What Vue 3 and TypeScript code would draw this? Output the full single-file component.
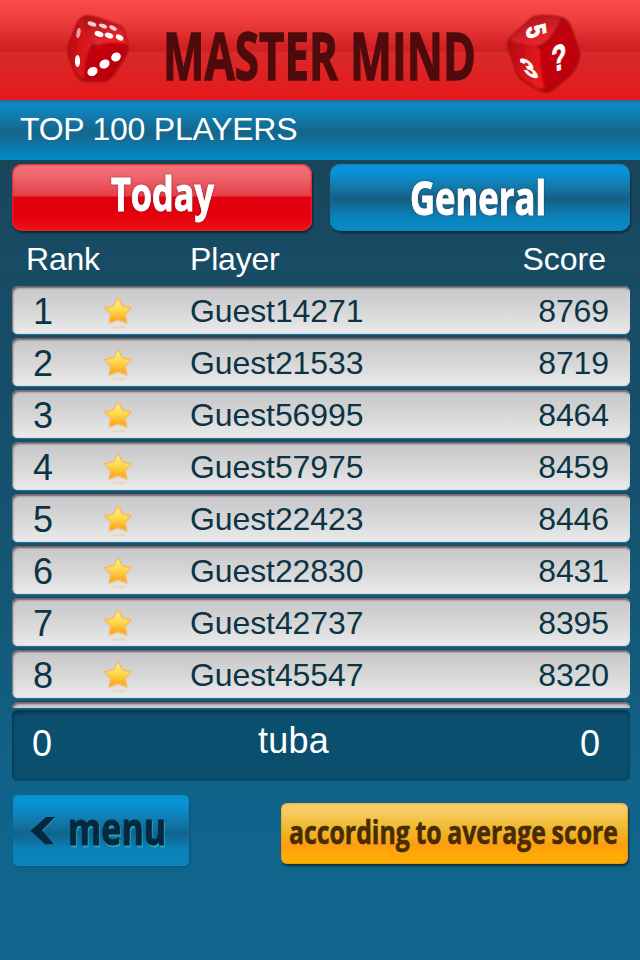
<script setup lang="ts">
import { ref } from "vue";

interface Entry {
  rank: number;
  name: string;
  score: number;
}

const tab = ref<"today" | "general">("today");

const entries: Entry[] = [
  { rank: 1, name: "Guest14271", score: 8769 },
  { rank: 2, name: "Guest21533", score: 8719 },
  { rank: 3, name: "Guest56995", score: 8464 },
  { rank: 4, name: "Guest57975", score: 8459 },
  { rank: 5, name: "Guest22423", score: 8446 },
  { rank: 6, name: "Guest22830", score: 8431 },
  { rank: 7, name: "Guest42737", score: 8395 },
  { rank: 8, name: "Guest45547", score: 8320 },
];

const me: Entry = { rank: 0, name: "tuba", score: 0 };
</script>

<template>
  <div class="screen">
    <svg class="defs" width="0" height="0">
      <defs>
        <linearGradient id="starFill" x1="0" y1="0" x2="0" y2="1">
          <stop offset="0" stop-color="#fff08a" />
          <stop offset="0.5" stop-color="#ffd84a" />
          <stop offset="1" stop-color="#fb9a12" />
        </linearGradient>
        <linearGradient id="dieTop" x1="0" y1="0" x2="0.6" y2="1">
          <stop offset="0" stop-color="#a80f14" />
          <stop offset="1" stop-color="#ee2a30" />
        </linearGradient>
        <linearGradient id="dieLeft" x1="0" y1="0" x2="1" y2="0.4">
          <stop offset="0" stop-color="#b3080e" />
          <stop offset="1" stop-color="#ea1c22" />
        </linearGradient>
        <linearGradient id="dieRight" x1="0" y1="0" x2="1" y2="1">
          <stop offset="0" stop-color="#c90308" />
          <stop offset="1" stop-color="#b8040a" />
        </linearGradient>
        <filter id="soft" x="-10%" y="-10%" width="120%" height="120%">
          <feGaussianBlur stdDeviation="0.9" />
        </filter>
      </defs>
    </svg>

    <header class="header">
      <svg class="die" width="64" height="70" viewBox="66 13 64 70">
        <path d="M84 16Q88 15 96 17L119 25Q124 27 125 33L128 46Q129 51 126 56L114 75Q110 81 103 82L86 82Q80 81 76 75L69 59Q67 53 68 46L76 25Q79 18 84 16Z" fill="#a30a10" filter="url(#soft)" />
        <g filter="url(#soft)">
          <path d="M84 17Q88 16 96 18L119 26Q124 29 125 38L127 45Q112 42 100 45Q92 46 88 38Q82 28 84 17Z" fill="url(#dieTop)" />
          <path d="M83 18Q82 31 92 45Q84 55 84 79Q78 77 75 70L70 57Q68 51 69 46L77 26Q79 20 83 18Z" fill="url(#dieLeft)" />
          <path d="M93 49Q102 40 125 43Q129 47 125 55L113 73Q108 80 102 80L88 80Q83 79 84 70Q85 56 93 49Z" fill="url(#dieRight)" />
        </g>
        <g fill="#fff">
          <g opacity="0.8">
            <ellipse cx="92" cy="24" rx="4.500" ry="2.200" transform="rotate(18 92 24)" />
            <ellipse cx="103" cy="26" rx="4.200" ry="2" transform="rotate(20 103 26)" />
            <ellipse cx="113" cy="28" rx="4" ry="2" transform="rotate(28 113 28)" />
          </g>
          <ellipse cx="99" cy="34" rx="4.600" ry="2.700" transform="rotate(20 99 34)" />
          <ellipse cx="109" cy="35.500" rx="4.400" ry="2.600" transform="rotate(20 109 35.5)" />
          <ellipse cx="119.500" cy="37.500" rx="4" ry="2.600" transform="rotate(28 119.5 37.5)" />
          <ellipse cx="78.500" cy="33" rx="2" ry="5" opacity="0.6" transform="rotate(10 78.5 33)" />
          <ellipse cx="77.500" cy="61" rx="2.600" ry="6" />
          <ellipse cx="92.500" cy="71.500" rx="5.300" ry="4.300" transform="rotate(-30 92.5 71.5)" />
          <ellipse cx="104.500" cy="64" rx="5.300" ry="4.300" transform="rotate(-30 104.5 64)" />
          <ellipse cx="116" cy="57" rx="5" ry="4.300" transform="rotate(-30 116 57)" />
        </g>
      </svg>

      <svg class="title" width="316" height="70" viewBox="0 0 316 70">
        <text class="cond title-text" x="0" y="60" textLength="175" lengthAdjust="spacingAndGlyphs">MASTER</text>
        <text class="cond title-text" x="187" y="60" textLength="126" lengthAdjust="spacingAndGlyphs">MIND</text>
      </svg>

      <svg class="die" width="76" height="82" viewBox="506 13 76 82">
        <path d="M537 16Q545 14 561 17Q567 18 570 24L579 50Q581 57 577 66Q573 74 565 80L552 91Q547 94 540 91L524 82Q519 79 516 71L508 48Q506 42 511 37L530 19Q533 16 537 16Z" fill="#9d0b10" filter="url(#soft)" />
        <g filter="url(#soft)">
          <path d="M537 17Q548 15 561 18Q559 26 551 36Q545 44 536 46Q521 45 510 41Q511 37 516 33L531 20Q533 17 537 17Z" fill="url(#dieTop)" />
          <path d="M510 41Q523 44 535 46Q542 48 543 58L545 86Q543 91 537 88L524 80Q519 77 516 69L509 48Z" fill="url(#dieLeft)" />
          <path d="M541 48Q555 37 563 22Q568 21 571 29L578 50Q580 57 576 65Q572 73 564 79L552 89Q545 93 544 86Q538 60 541 48Z" fill="url(#dieRight)" />
        </g>
        <text class="die-text" font-size="25" transform="matrix(0.1 0.85 -1.08 0.34 527 34)">5</text>
        <text class="die-text" font-size="29" transform="matrix(0.85 0.25 0.42 0.88 533 77)">3</text>
        <text class="die-text" font-size="36" transform="matrix(0.68 -0.2 0.04 1 559.500 70)">?</text>
      </svg>
    </header>

    <div class="subtitle"><span>TOP 100 PLAYERS</span></div>

    <div class="tabs">
      <button class="tab tab-red" :aria-pressed="tab === 'today'" @click="tab = 'today'">
        <svg width="300" height="67" viewBox="0 0 300 67">
          <text class="cond tab-text" x="99" y="47" textLength="103" lengthAdjust="spacingAndGlyphs">Today</text>
        </svg>
      </button>
      <button class="tab tab-blue" :aria-pressed="tab === 'general'" @click="tab = 'general'">
        <svg width="300" height="67" viewBox="0 0 300 67">
          <text class="cond tab-text" x="80" y="51" textLength="136" lengthAdjust="spacingAndGlyphs">General</text>
        </svg>
      </button>
    </div>

    <div class="columns">
      <span class="c-rank">Rank</span>
      <span class="c-player">Player</span>
      <span class="c-score">Score</span>
    </div>

    <div class="list">
      <div v-for="e in entries" :key="e.rank" class="row">
        <span class="rank">{{ e.rank }}</span>
        <svg class="star" width="32" height="36" viewBox="0 0 32 36">
          <path d="M16 2.500L20.600 11L29.500 12.500L23.400 19.200L24.800 28L16 24.800L7.200 28L8.600 19.200L2.500 12.500L11.400 11Z" fill="url(#starFill)" stroke="#f3bd68" stroke-width="1.500" stroke-linejoin="round" />
          <path d="M9 31.500L13 30.500L16 32L19 30.500L24 31.500L23 33.500H9Z" fill="#f8c98a" opacity="0.4" />
        </svg>
        <span class="name">{{ e.name }}</span>
        <span class="score">{{ e.score }}</span>
      </div>
      <div class="row"></div>
    </div>

    <div class="me">
      <span class="me-rank">{{ me.rank }}</span>
      <span class="me-name">{{ me.name }}</span>
      <span class="me-score">{{ me.score }}</span>
    </div>

    <footer class="footer">
      <button class="menu">
        <svg width="176" height="71" viewBox="0 0 176 71">
          <path d="M35 23H42L29 37L42 50H34L18 37Z" fill="#30b5cf" opacity="0.7" />
          <path d="M33 22H42L29 35.500L41 49.500H32.500L17.500 36Z" fill="#04293c" />
          <text class="cond menu-text" x="55" y="50" textLength="98" lengthAdjust="spacingAndGlyphs">menu</text>
        </svg>
      </button>
      <button class="average">
        <svg width="346" height="60" viewBox="0 0 346 60">
          <text class="cond average-text" x="8" y="39.500" word-spacing="-1" textLength="329" lengthAdjust="spacingAndGlyphs">according to average score</text>
        </svg>
      </button>
    </footer>
  </div>
</template>

<style>
body {
  margin: 0;
  background: #10668f;
}
</style>

<style scoped>
.screen {
  width: 640px;
  height: 960px;
  overflow: hidden;
  display: flex;
  flex-direction: column;
  font-family: "Liberation Sans", Arial, sans-serif;
  font-size: 32px;
  color: #fff;
  background: linear-gradient(#19455a 160px, #184b64 260px, #15516e 480px, #135d7f 700px, #10648b 800px, #10668f 960px);
}

.defs {
  position: absolute;
}

button {
  display: block;
  padding: 0;
  border: 0;
  box-sizing: border-box;
  cursor: pointer;
}

button svg {
  display: block;
}

svg {
  overflow: visible;
}

.cond {
  font-family: "Open Sans", "Noto Sans", sans-serif;
  font-weight: 700;
}

.header {
  flex: none;
  height: 100px;
  box-sizing: border-box;
  padding: 13px 58px 0 66px;
  display: flex;
  justify-content: space-between;
  background: linear-gradient(#fb4a4a 0, #f24040 18px, #cf1f22 49px, #cf1f22 51px, #d82a2c 52px, #e61919 100px);
}

.title {
  margin: 7px 0 0 5px;
}

.title-text {
  font-size: 67px;
  fill: #4f0a0c;
  stroke: #4f0a0c;
  stroke-width: 1.4;
}

.die {
  flex: none;
}

.die-text {
  font-family: "Liberation Sans", Arial, sans-serif;
  font-weight: 700;
  fill: #fff;
  stroke: #fff;
  stroke-width: 1;
  text-anchor: middle;
}

.subtitle {
  flex: none;
  height: 60px;
  line-height: 58px;
  padding-left: 20px;
  letter-spacing: -0.25px;
  background: linear-gradient(#1b6d98 0, #0f87c0 3px, #0f87c0 8px, #14688f 30px, #14688f 36px, #0688c4 56px, #0688c4 60px);
}

.tabs {
  flex: none;
  display: flex;
  gap: 18px;
  padding: 4px 10px 0 12px;
}

.tab {
  width: 300px;
  height: 67px;
  border-radius: 10px;
}

.tab-red {
  background: linear-gradient(#f2767c 0, #ee666e 12px, #e63f49 32px, #e2000f 33px, #e4000d 52px, #f01412 67px);
  box-shadow: 1px 2px 2px #0b2635, inset 0 0 2px 1px #d92735;
}

.tab-blue {
  background: linear-gradient(#0c8dd0 0, #0895dc 6px, #1577a6 24px, #135f85 35px, #0b82ba 53px, #098bc8 67px);
  box-shadow: 1px 2px 2px #0b2b3e, inset 0 0 2px #1a79aa;
}

.tab-text {
  font-size: 46px;
  fill: #fff;
  stroke: #fff;
  stroke-width: 1;
  filter: drop-shadow(0 0 1px rgba(60, 30, 40, 0.6));
}

.columns {
  flex: none;
  display: grid;
  grid-template-columns: 164px 1fr auto;
  height: 55px;
  padding: 0 34px 0 26px;
  line-height: 56px;
}

.c-rank,
.c-player {
  letter-spacing: -0.2px;
}

.list {
  flex: none;
  height: 422px;
  overflow: hidden;
  padding: 0 10px 0 12px;
  display: flex;
  flex-direction: column;
  gap: 4px;
}

.row {
  flex: none;
  height: 48px;
  box-sizing: border-box;
  display: grid;
  grid-template-columns: 62px 90px 1fr auto;
  grid-template-rows: 48px;
  align-items: start;
  padding-right: 21px;
  border-radius: 6px;
  color: #0b3445;
  background: linear-gradient(#c6c6c8, #d6d6d7 50%, #ebebeb);
  box-shadow: inset 1px 2px 2px #6b6267, inset -1px -1px 1px #d5e2e8, 0 1px 1px #287291, 0 -1px 1px #2c4658;
}

.rank {
  font-size: 36px;
  line-height: 52px;
  text-align: center;
}

.star {
  margin: 9px 0 0 28px;
}

.name {
  margin-left: 26px;
  line-height: 50px;
  letter-spacing: -0.1px;
}

.score {
  line-height: 50px;
  letter-spacing: -0.1px;
}

.me {
  flex: none;
  height: 71px;
  margin: 2px 10px 0 12px;
  padding: 0 30px 0 20px;
  box-sizing: border-box;
  display: grid;
  grid-template-columns: 1fr auto 1fr;
  border-radius: 6px;
  font-size: 36px;
  line-height: 68px;
  background: #0a4f6e;
  box-shadow: inset 1px 3px 3px #06334e, inset -1px -1px 2px #0b4664, 0 1px 1px #14688f;
}

.me-name {
  line-height: 62px;
  letter-spacing: 0.2px;
  margin-right: 45px;
}

.me-score {
  text-align: right;
}

.footer {
  flex: none;
  display: flex;
  justify-content: space-between;
  align-items: flex-start;
  padding: 14px 12px 0 13px;
}

.menu {
  width: 176px;
  height: 71px;
  border-radius: 5px;
  background: linear-gradient(#0992d4 0, #0895da 7px, #1278aa 27px, #12648e 38px, #0a80b7 54px, #0b86c1 71px);
  box-shadow: 1px 1px 2px #0c517a, inset 0 0 2px #1580b4;
}

.menu-text {
  font-size: 44px;
  fill: #04293c;
  stroke: #04293c;
  stroke-width: 1;
  filter: drop-shadow(1px 2px 0.5px rgba(48, 181, 207, 0.7));
}

.average {
  width: 347px;
  height: 61px;
  margin-top: 8px;
  border-radius: 6px;
  background: linear-gradient(#fbc85c 0, #fbce6c 5px, #f0bd36 22px, #f5ae22 32px, #fd9d12 42px, #ffa906 52px, #ffac06 61px);
  box-shadow: 1px 2px 2px #14303a, inset 0 0 2px #b97e18;
}

.average-text {
  font-size: 32px;
  fill: #472c02;
  stroke: #472c02;
  stroke-width: 0.6;
}
</style>
